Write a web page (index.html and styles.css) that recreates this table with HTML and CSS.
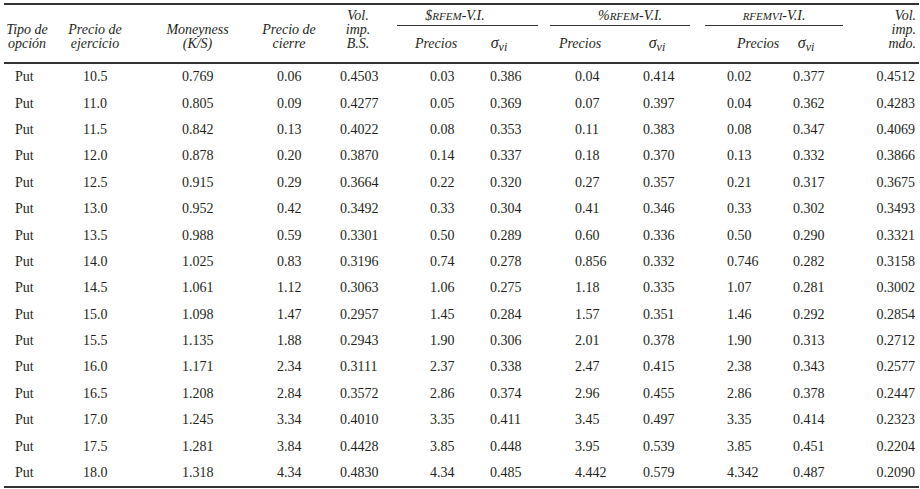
FILE: index.html
```html
<!DOCTYPE html>
<html lang="es">
<head>
<meta charset="utf-8">
<title>Tabla de opciones</title>
<link rel="stylesheet" href="styles.css">
</head>
<body>
<table class="tbl">
  <colgroup>
    <col class="c1"><col class="c2"><col class="c3"><col class="c4"><col class="c5">
    <col class="c6"><col class="c7"><col class="c8"><col class="c9"><col class="c10">
    <col class="c11"><col class="c12">
  </colgroup>
  <thead>
    <tr class="grp">
      <th rowspan="2" class="hd h1">Tipo de<br>opción</th>
      <th rowspan="2" class="hd h2">Precio de<br>ejercicio</th>
      <th rowspan="2" class="hd h3">Moneyness<br>(K/S)</th>
      <th rowspan="2" class="hd h4">Precio de<br>cierre</th>
      <th rowspan="2" class="hd h5">Vol.<br>imp.<br>B.S.</th>
      <th colspan="2" class="gc"><div class="gl g1">$<span class="sc">rfem</span>-V.I.</div></th>
      <th colspan="2" class="gc"><div class="gl g2">%<span class="sc">rfem</span>-V.I.</div></th>
      <th colspan="2" class="gc"><div class="gl g3"><span class="sc">rfemvi</span>-V.I.</div></th>
      <th rowspan="2" class="hd h12">Vol.<br>imp.<br>mdo.</th>
    </tr>
    <tr class="sub">
      <th class="s6">Precios</th>
      <th class="s7"><span class="sig">σ<sub>vi</sub></span></th>
      <th class="s8">Precios</th>
      <th class="s9"><span class="sig">σ<sub>vi</sub></span></th>
      <th class="s10">Precios</th>
      <th class="s11"><span class="sig">σ<sub>vi</sub></span></th>
    </tr>
  </thead>
  <tbody>
    <tr><td>Put</td><td>10.5</td><td>0.769</td><td>0.06</td><td>0.4503</td><td>0.03</td><td>0.386</td><td>0.04</td><td>0.414</td><td>0.02</td><td>0.377</td><td>0.4512</td></tr>
    <tr><td>Put</td><td>11.0</td><td>0.805</td><td>0.09</td><td>0.4277</td><td>0.05</td><td>0.369</td><td>0.07</td><td>0.397</td><td>0.04</td><td>0.362</td><td>0.4283</td></tr>
    <tr><td>Put</td><td>11.5</td><td>0.842</td><td>0.13</td><td>0.4022</td><td>0.08</td><td>0.353</td><td>0.11</td><td>0.383</td><td>0.08</td><td>0.347</td><td>0.4069</td></tr>
    <tr><td>Put</td><td>12.0</td><td>0.878</td><td>0.20</td><td>0.3870</td><td>0.14</td><td>0.337</td><td>0.18</td><td>0.370</td><td>0.13</td><td>0.332</td><td>0.3866</td></tr>
    <tr><td>Put</td><td>12.5</td><td>0.915</td><td>0.29</td><td>0.3664</td><td>0.22</td><td>0.320</td><td>0.27</td><td>0.357</td><td>0.21</td><td>0.317</td><td>0.3675</td></tr>
    <tr><td>Put</td><td>13.0</td><td>0.952</td><td>0.42</td><td>0.3492</td><td>0.33</td><td>0.304</td><td>0.41</td><td>0.346</td><td>0.33</td><td>0.302</td><td>0.3493</td></tr>
    <tr><td>Put</td><td>13.5</td><td>0.988</td><td>0.59</td><td>0.3301</td><td>0.50</td><td>0.289</td><td>0.60</td><td>0.336</td><td>0.50</td><td>0.290</td><td>0.3321</td></tr>
    <tr><td>Put</td><td>14.0</td><td>1.025</td><td>0.83</td><td>0.3196</td><td>0.74</td><td>0.278</td><td>0.856</td><td>0.332</td><td>0.746</td><td>0.282</td><td>0.3158</td></tr>
    <tr><td>Put</td><td>14.5</td><td>1.061</td><td>1.12</td><td>0.3063</td><td>1.06</td><td>0.275</td><td>1.18</td><td>0.335</td><td>1.07</td><td>0.281</td><td>0.3002</td></tr>
    <tr><td>Put</td><td>15.0</td><td>1.098</td><td>1.47</td><td>0.2957</td><td>1.45</td><td>0.284</td><td>1.57</td><td>0.351</td><td>1.46</td><td>0.292</td><td>0.2854</td></tr>
    <tr><td>Put</td><td>15.5</td><td>1.135</td><td>1.88</td><td>0.2943</td><td>1.90</td><td>0.306</td><td>2.01</td><td>0.378</td><td>1.90</td><td>0.313</td><td>0.2712</td></tr>
    <tr><td>Put</td><td>16.0</td><td>1.171</td><td>2.34</td><td>0.3111</td><td>2.37</td><td>0.338</td><td>2.47</td><td>0.415</td><td>2.38</td><td>0.343</td><td>0.2577</td></tr>
    <tr><td>Put</td><td>16.5</td><td>1.208</td><td>2.84</td><td>0.3572</td><td>2.86</td><td>0.374</td><td>2.96</td><td>0.455</td><td>2.86</td><td>0.378</td><td>0.2447</td></tr>
    <tr><td>Put</td><td>17.0</td><td>1.245</td><td>3.34</td><td>0.4010</td><td>3.35</td><td>0.411</td><td>3.45</td><td>0.497</td><td>3.35</td><td>0.414</td><td>0.2323</td></tr>
    <tr><td>Put</td><td>17.5</td><td>1.281</td><td>3.84</td><td>0.4428</td><td>3.85</td><td>0.448</td><td>3.95</td><td>0.539</td><td>3.85</td><td>0.451</td><td>0.2204</td></tr>
    <tr><td>Put</td><td>18.0</td><td>1.318</td><td>4.34</td><td>0.4830</td><td>4.34</td><td>0.485</td><td>4.442</td><td>0.579</td><td>4.342</td><td>0.487</td><td>0.2090</td></tr>
  </tbody>
</table>
</body>
</html>
```

FILE: styles.css
```css
html, body {
  margin: 0;
  padding: 0;
  background: #ffffff;
}

body {
  font-family: "Liberation Serif", "Times New Roman", serif;
  font-size: 14px;
  color: #231f20;
}

.tbl {
  border-collapse: separate;
  border-spacing: 0;
  table-layout: fixed;
  width: 915px;
  margin: 3px 0 0 4px;
  border-top: 2px solid #333;
  border-bottom: 2px solid #333;
}

.c1 { width: 56px; }
.c2 { width: 90px; }
.c3 { width: 95px; }
.c4 { width: 80px; }
.c5 { width: 72px; }
.c6 { width: 73px; }
.c7 { width: 73px; }
.c8 { width: 77px; }
.c9 { width: 80px; }
.c10 { width: 75px; }
.c11 { width: 73px; }
.c12 { width: 71px; }

th {
  font-weight: normal;
  font-style: italic;
  padding: 0;
  line-height: 14px;
  white-space: nowrap;
}

.sig {
  font-size: 16px;
}

.sig sub {
  font-size: 12px;
  line-height: 0;
  vertical-align: -3px;
}

.grp { height: 21px; }
.sub { height: 38px; }

.hd {
  vertical-align: bottom;
  text-align: center;
  padding-bottom: 11px;
  border-bottom: 2px solid #333;
}

.h1 { padding-right: 10px; }
.h2 { padding-right: 20px; }
.h4 { padding-left: 8px; }
.h5 { padding-right: 6px; }
.h12 { text-align: right; padding-right: 3px; }

.gc {
  vertical-align: top;
}

.gl {
  height: 20px;
  line-height: 20px;
  border-bottom: 1px solid #333;
  text-align: center;
}

.g1 { margin-right: 5px; padding-right: 25px; }
.g2 { margin: 0 10px 0 7px; padding-left: 20px; }
.g3 { margin: 0 5px; }

.sc {
  font-variant: small-caps;
  font-size: 15px;
}

.sub th {
  vertical-align: bottom;
  text-align: center;
  padding-bottom: 11px;
  border-bottom: 2px solid #333;
}

.sub .s6 { padding-left: 5px; }
.sub .s7 { padding-right: 15px; }
.sub .s8 { padding-right: 3px; }
.sub .s9 { padding-right: 6px; }
.sub .s10 { text-align: left; padding-left: 37px; }
.sub .s11 { padding-right: 11px; }

tbody tr { height: 26.4px; }

td {
  padding: 0;
  text-align: left;
  vertical-align: middle;
  white-space: nowrap;
  line-height: 16px;
}

td:nth-child(1) { padding-left: 11px; }
td:nth-child(2) { padding-left: 23px; }
td:nth-child(3) { padding-left: 32px; }
td:nth-child(4) { padding-left: 32px; }
td:nth-child(5) { padding-left: 15px; }
td:nth-child(6) { padding-left: 33px; }
td:nth-child(7) { padding-left: 20px; }
td:nth-child(8) { padding-left: 32px; }
td:nth-child(9) { padding-left: 23px; }
td:nth-child(10) { padding-left: 27px; }
td:nth-child(11) { padding-left: 18px; }
td:nth-child(12) { text-align: right; padding-right: 4px; }
```
